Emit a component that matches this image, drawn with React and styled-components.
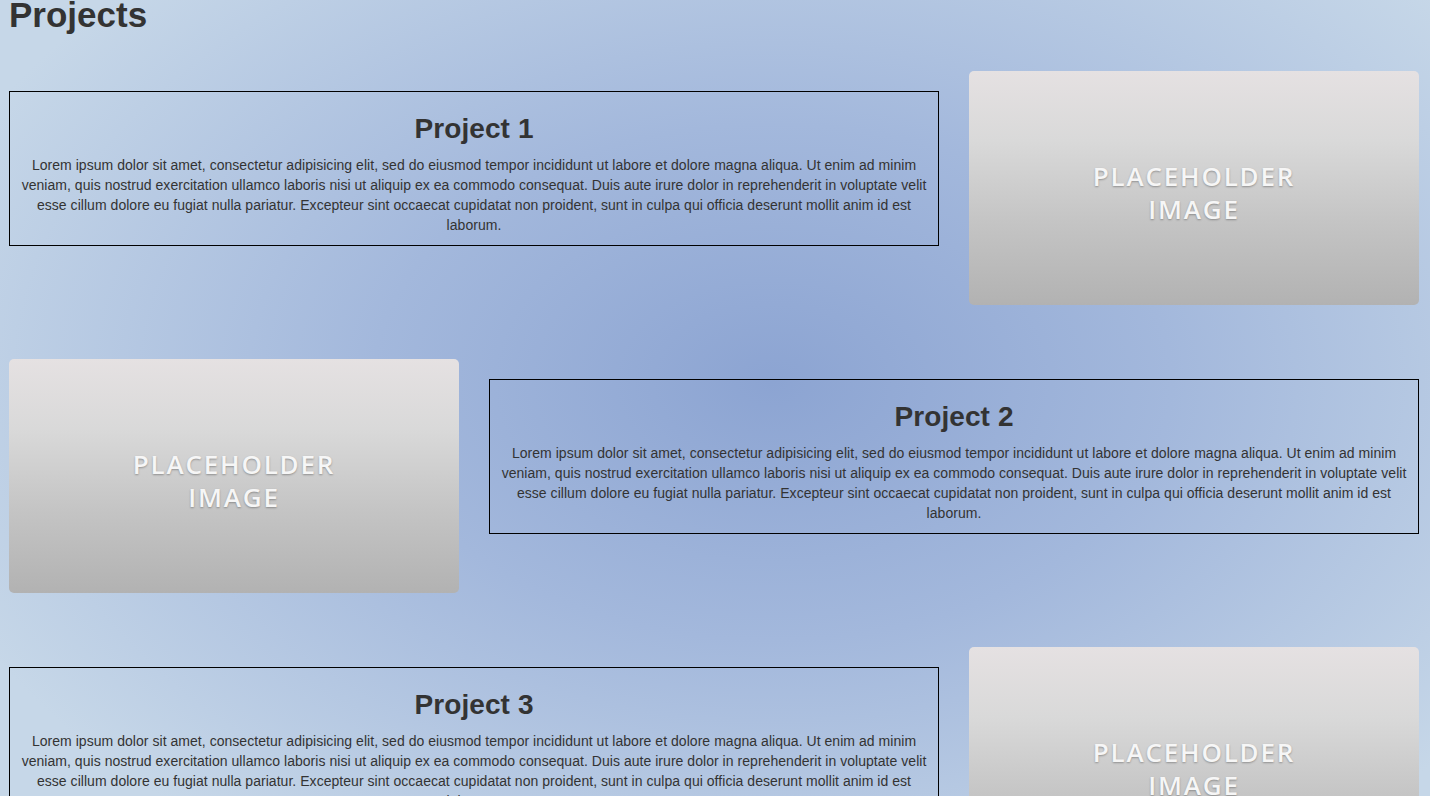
import React from "react";
import styled, { createGlobalStyle } from "styled-components";

const GlobalStyle = createGlobalStyle`
  html, body {
    margin: 0;
    padding: 0;
  }
  body {
    min-height: 100vh;
    font-family: "Liberation Sans", Arial, sans-serif;
    color: #333;
    background: radial-gradient(ellipse 62% 72% at 54% 48%, #8ca4d2 0%, #a3b8dc 45%, #c6d7e8 100%);
    background-attachment: fixed;
  }
`;

const Page = styled.div`
  padding: 0 11px 40px 9px;
`;

const Title = styled.h1`
  margin: 0;
  font-size: 35px;
  line-height: 30px;
  font-weight: bold;
  color: #333;
`;

const List = styled.div`
  margin-top: 41px;
  display: flex;
  flex-direction: column;
  gap: 54px;
`;

const Row = styled.div`
  display: flex;
  flex-direction: ${(p) => (p.$reverse ? "row-reverse" : "row")};
  align-items: flex-start;
  gap: 30px;
`;

const TextBox = styled.div`
  flex: 1;
  margin-top: 20px;
  border: 1px solid #000;
  padding: 0 10px 10px;
  text-align: center;
`;

const ProjectName = styled.h2`
  margin: 21px 0 11px;
  font-size: 28px;
  line-height: 31px;
  font-weight: bold;
  letter-spacing: 0.1px;
`;

const Blurb = styled.p`
  margin: 0;
  font-size: 14px;
  line-height: 20px;
  letter-spacing: 0.04px;
`;

const Placeholder = styled.div`
  flex: 0 0 450px;
  height: 234px;
  box-sizing: border-box;
  padding-top: 10px;
  border-radius: 5px;
  background: linear-gradient(to bottom, #e5e1e2 0%, #d9d9d9 30%, #c4c4c4 65%, #b2b2b2 100%);
  display: flex;
  align-items: center;
  justify-content: center;
  text-align: center;
  font-family: "Open Sans", "DejaVu Sans", sans-serif;
  font-size: 26px;
  font-weight: 600;
  line-height: 33px;
  letter-spacing: 1.8px;
  color: #f6f6f6;
  text-shadow: 0 1px 2px rgba(0, 0, 0, 0.3);
`;

const lorem =
  "Lorem ipsum dolor sit amet, consectetur adipisicing elit, sed do eiusmod tempor incididunt ut labore et dolore magna aliqua. Ut enim ad minim veniam, quis nostrud exercitation ullamco laboris nisi ut aliquip ex ea commodo consequat. Duis aute irure dolor in reprehenderit in voluptate velit esse cillum dolore eu fugiat nulla pariatur. Excepteur sint occaecat cupidatat non proident, sunt in culpa qui officia deserunt mollit anim id est laborum.";

const projects = [
  { name: "Project 1" },
  { name: "Project 2" },
  { name: "Project 3" },
];

export default function App() {
  return (
    <>
      <GlobalStyle />
      <Page>
        <Title>Projects</Title>
        <List>
          {projects.map((p, i) => (
            <Row key={p.name} $reverse={i % 2 === 1}>
              <TextBox>
                <ProjectName>{p.name}</ProjectName>
                <Blurb>{lorem}</Blurb>
              </TextBox>
              <Placeholder>
                PLACEHOLDER
                <br />
                IMAGE
              </Placeholder>
            </Row>
          ))}
        </List>
      </Page>
    </>
  );
}
